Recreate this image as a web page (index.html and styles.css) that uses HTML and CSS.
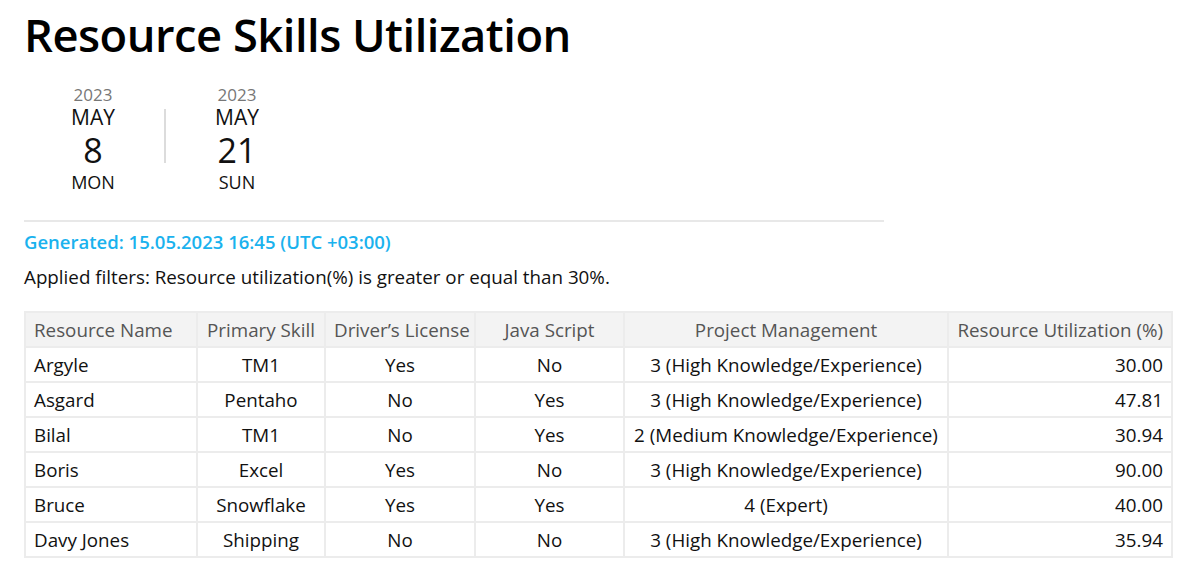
FILE: index.html
```html
<!DOCTYPE html>
<html lang="en">
<head>
<meta charset="utf-8">
<title>Resource Skills Utilization</title>
<link rel="stylesheet" href="styles.css">
</head>
<body>
<div class="page">
  <h1 class="title">Resource Skills Utilization</h1>
  <div class="dates">
    <div class="date">
      <div class="year">2023</div>
      <div class="month">MAY</div>
      <div class="day">8</div>
      <div class="weekday">MON</div>
    </div>
    <div class="date-sep"></div>
    <div class="date">
      <div class="year">2023</div>
      <div class="month">MAY</div>
      <div class="day">21</div>
      <div class="weekday">SUN</div>
    </div>
  </div>
  <div class="rule"></div>
  <div class="generated">Generated: 15.05.2023 16:45 (UTC +03:00)</div>
  <div class="filters">Applied filters: Resource utilization(%) is greater or equal than 30%.</div>
  <table class="grid">
    <colgroup>
      <col class="c1"><col class="c2"><col class="c3"><col class="c4"><col class="c5"><col class="c6">
    </colgroup>
    <thead>
      <tr>
        <th class="left">Resource Name</th>
        <th>Primary Skill</th>
        <th>Driver’s License</th>
        <th>Java Script</th>
        <th>Project Management</th>
        <th class="right">Resource Utilization (%)</th>
      </tr>
    </thead>
    <tbody>
      <tr><td class="left">Argyle</td><td>TM1</td><td>Yes</td><td>No</td><td>3 (High Knowledge/Experience)</td><td class="right">30.00</td></tr>
      <tr><td class="left">Asgard</td><td>Pentaho</td><td>No</td><td>Yes</td><td>3 (High Knowledge/Experience)</td><td class="right">47.81</td></tr>
      <tr><td class="left">Bilal</td><td>TM1</td><td>No</td><td>Yes</td><td>2 (Medium Knowledge/Experience)</td><td class="right">30.94</td></tr>
      <tr><td class="left">Boris</td><td>Excel</td><td>Yes</td><td>No</td><td>3 (High Knowledge/Experience)</td><td class="right">90.00</td></tr>
      <tr><td class="left">Bruce</td><td>Snowflake</td><td>Yes</td><td>Yes</td><td>4 (Expert)</td><td class="right">40.00</td></tr>
      <tr><td class="left">Davy Jones</td><td>Shipping</td><td>No</td><td>No</td><td>3 (High Knowledge/Experience)</td><td class="right">35.94</td></tr>
    </tbody>
  </table>
</div>
</body>
</html>
```
FILE: styles.css
```css
* { box-sizing: border-box; }
html, body { margin: 0; padding: 0; background: #fff; }
body {
  font-family: "Open Sans", "Noto Sans", "Liberation Sans", sans-serif;
  color: #111;
}
.page {
  padding: 0 0 0 24px;
}
.title {
  margin: 0;
  padding-top: 7px;
  font-size: 45.3px;
  font-weight: 600;
  line-height: 56px;
  color: #000;
  letter-spacing: -0.5px;
}
.dates {
  display: flex;
  align-items: center;
  margin-top: 22px;
  padding-left: 22px;
}
.date {
  width: 94px;
  display: flex;
  flex-direction: column;
  align-items: center;
  color: #111;
}
.year { font-size: 17px; line-height: 20px; color: #777; }
.month { font-size: 21px; line-height: 24px; }
.day { font-size: 34px; line-height: 42px; }
.weekday { font-size: 18px; line-height: 22px; }
.date-sep {
  width: 2px;
  height: 54px;
  background: #dcdcdc;
  margin: -6px 24px 0 24px;
}
.rule {
  width: 860px;
  height: 2px;
  background: #e8e8e8;
  margin-top: 27px;
}
.generated {
  margin-top: 8px;
  font-size: 18.5px;
  line-height: 24px;
  font-weight: 600;
  color: #1ab2ee;
}
.filters {
  margin-top: 11px;
  font-size: 18.8px;
  line-height: 24px;
  color: #111;
}
.grid {
  margin-top: 22px;
  border-collapse: collapse;
  table-layout: fixed;
  width: 1147px;
  font-size: 18.8px;
  border: 1px solid #efefef;
}
.c1 { width: 172px; }
.c2 { width: 128px; }
.c3 { width: 150px; }
.c4 { width: 149px; }
.c5 { width: 324px; }
.c6 { width: 224px; }
.grid th, .grid td {
  height: 35px;
  padding: 0 8px;
  border: 2px solid #ececec;
  text-align: center;
  white-space: nowrap;
  overflow: hidden;
}
.grid th {
  background: #f3f3f3;
  font-weight: 400;
  color: #555;
}
.grid td { color: #111; }
.grid .left { text-align: left; }
.grid .right { text-align: right; }
```
